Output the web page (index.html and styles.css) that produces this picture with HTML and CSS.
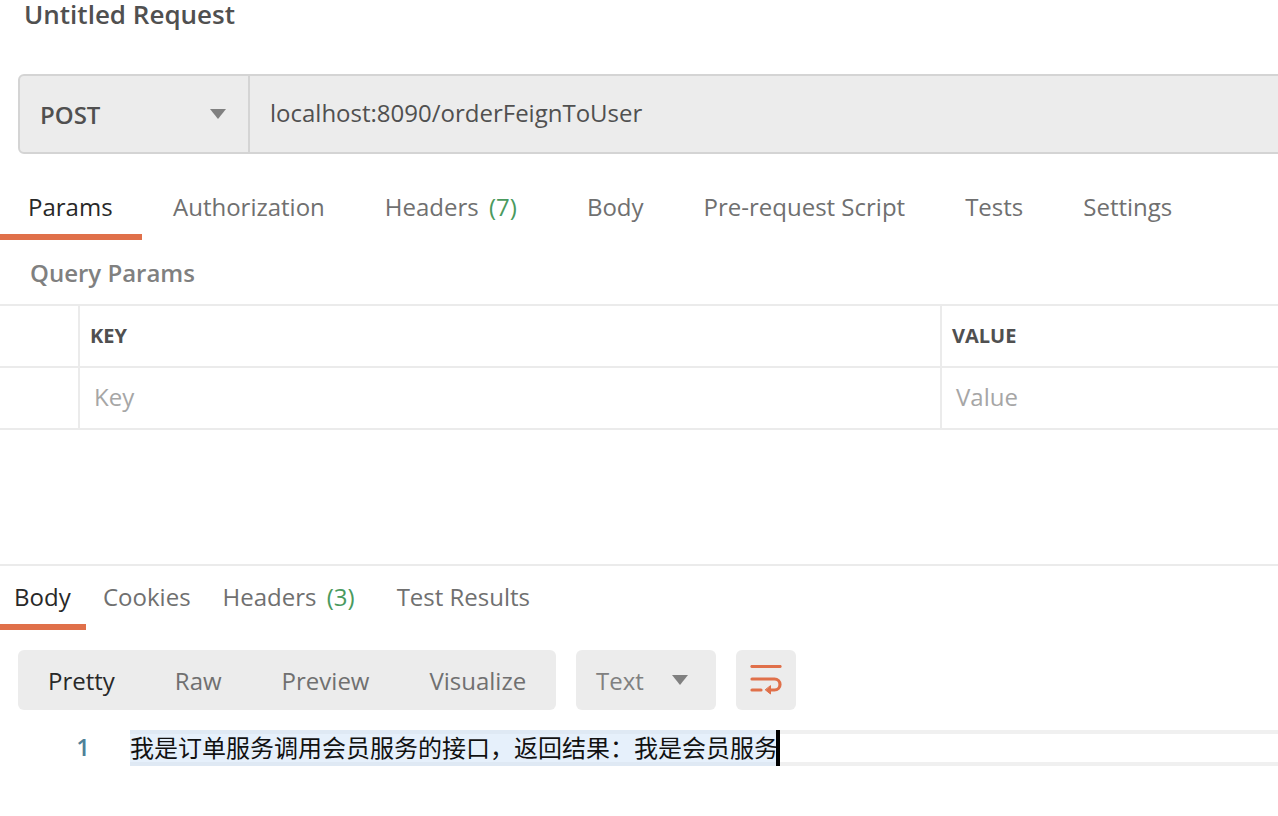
FILE: index.html
```html
<!DOCTYPE html>
<html lang="zh">
<head>
<meta charset="utf-8">
<title>Untitled Request</title>
<link rel="stylesheet" href="styles.css">
</head>
<body>
<h1 class="title">Untitled Request</h1>
<div class="urlbar">
  <div class="method"><span>POST</span><i class="caret"></i></div>
  <div class="url">localhost:8090/orderFeignToUser</div>
</div>
<nav class="tabs req-tabs">
  <span class="tab active">Params</span>
  <span class="tab">Authorization</span>
  <span class="tab">Headers <em>(7)</em></span>
  <span class="tab">Body</span>
  <span class="tab">Pre-request Script</span>
  <span class="tab">Tests</span>
  <span class="tab">Settings</span>
</nav>
<div class="query">Query Params</div>
<div class="table">
  <div class="row">
    <div class="c0"></div>
    <div class="c1 head">KEY</div>
    <div class="c2 head">VALUE</div>
  </div>
  <div class="row">
    <div class="c0"></div>
    <div class="c1 ph">Key</div>
    <div class="c2 ph">Value</div>
  </div>
</div>
<section class="response">
  <nav class="tabs res-tabs">
    <span class="tab active">Body</span>
    <span class="tab">Cookies</span>
    <span class="tab">Headers <em>(3)</em></span>
    <span class="tab">Test Results</span>
  </nav>
  <div class="toolbar">
    <div class="modes">
      <span class="mode active">Pretty</span>
      <span class="mode">Raw</span>
      <span class="mode">Preview</span>
      <span class="mode">Visualize</span>
    </div>
    <div class="format"><span>Text</span><i class="caret"></i></div>
    <div class="wrap">
      <svg width="32" height="30" viewBox="0 0 32 30" fill="none" stroke="#e0704a" stroke-width="3.2" stroke-linecap="round" stroke-linejoin="round">
        <path d="M2 1.500H30"/>
        <path d="M2 14H24.500a5.500 5.500 0 0 1 0 11H19"/>
        <path d="M2 25H11"/>
        <path d="M20.500 21V29L15.500 25Z" fill="#e0704a" stroke-width="1"/>
      </svg>
    </div>
  </div>
  <div class="code">
    <span class="num">1</span>
    <div class="line"><span class="sel">我是订单服务调用会员服务的接口，返回结果：我是会员服务</span><i class="cursor"></i></div>
  </div>
</section>
</body>
</html>
```
FILE: styles.css
```css
* { box-sizing: border-box; }
html, body { margin: 0; padding: 0; height: 100%; overflow: hidden; }
body {
  background: #fff;
  font-family: "Open Sans", "Noto Sans", sans-serif;
  font-size: 24px;
  color: #505050;
  width: 1278px;
  height: 816px;
}
.title {
  margin: 0;
  padding: 0 0 0 24px;
  height: 74px;
  font-size: 26px;
  font-weight: 600;
  line-height: 28px;
  color: #505050;
}
.urlbar {
  display: flex;
  margin-left: 18px;
  width: 1300px;
  height: 80px;
  background: #ececec;
  border: 2px solid #d4d4d4;
  border-radius: 6px;
}
.method {
  width: 230px;
  flex: none;
  display: flex;
  align-items: center;
  justify-content: space-between;
  padding: 0 22px 0 20px;
  border-right: 2px solid #d4d4d4;
  font-weight: 600;
  color: #505050;
}
.caret {
  width: 0;
  height: 0;
  border-left: 8px solid transparent;
  border-right: 8px solid transparent;
  border-top: 10px solid #808080;
}
.url {
  padding: 0 20px;
  line-height: 74px;
  color: #505050;
}
.tabs { display: flex; }
.tab {
  display: block;
  color: #707070;
  white-space: nowrap;
}
.tab em { font-style: normal; color: #4a9a5e; margin: 0 10px 0 4px; }
.tab.active { color: #282828; border-bottom: 6px solid #e0704a; }
.req-tabs { height: 86px; padding-top: 34px; gap: 60px; }
.req-tabs .tab { line-height: 38px; height: 52px; }
.req-tabs .tab.active { width: 142px; padding-left: 28px; margin-right: -29px; }
.query {
  height: 66px;
  padding-left: 30px;
  line-height: 66px;
  font-size: 24px;
  font-weight: 600;
  color: #808080;
}
.table { border-top: 2px solid #ebebeb; margin-top: -2px; }
.row {
  display: flex;
  height: 62px;
  border-bottom: 2px solid #ebebeb;
}
.c0 { width: 78px; flex: none; }
.c1 { width: 862px; flex: none; border-left: 2px solid #ebebeb; }
.c2 { flex: 1; border-left: 2px solid #ebebeb; }
.head {
  padding-left: 10px;
  font-size: 20px;
  font-weight: 700;
  line-height: 60px;
  color: #505050;
}
.ph {
  padding-left: 14px;
  line-height: 58px;
  color: #a6a6a6;
}
.response {
  margin-top: 134px;
  border-top: 2px solid #ebebeb;
}
.res-tabs { height: 64px; padding-top: 12px; gap: 32px; }
.res-tabs .tab { line-height: 38px; height: 52px; }
.res-tabs .tab.active { width: 86px; padding-left: 14px; margin-right: -15px; }
.toolbar {
  display: flex;
  gap: 20px;
  margin: 20px 0 0 18px;
  height: 60px;
}
.modes {
  width: 538px;
  display: flex;
  align-items: center;
  gap: 60px;
  padding-left: 30px;
  background: #ececec;
  border-radius: 6px;
  color: #707070;
}
.mode.active { color: #282828; }
.format {
  width: 140px;
  display: flex;
  align-items: center;
  justify-content: space-between;
  padding: 0 28px 0 20px;
  background: #ececec;
  border-radius: 6px;
  color: #808080;
}
.wrap {
  width: 60px;
  display: flex;
  align-items: center;
  justify-content: center;
  background: #ececec;
  border-radius: 6px;
}
.code {
  display: flex;
  margin-top: 20px;
  height: 36px;
}
.num {
  width: 130px;
  flex: none;
  padding-right: 40px;
  text-align: right;
  line-height: 34px;
  font-weight: 600;
  color: #4f8199;
}
.line {
  flex: 1;
  position: relative;
  border-top: 4px solid #f0f0f0;
  border-bottom: 4px solid #f0f0f0;
  height: 36px;
}
.sel {
  position: absolute;
  left: 0;
  top: -4px;
  height: 36px;
  background: #e6f0fb;
  box-shadow: inset 0 4px 0 #dfe9f4, inset 0 -4px 0 #dfe9f4;
  font-family: "Noto Sans CJK SC", sans-serif;
  font-size: 24px;
  line-height: 34px;
  color: #111;
  white-space: nowrap;
}
.cursor {
  position: absolute;
  left: 646px;
  top: -4px;
  width: 4px;
  height: 36px;
  background: #000;
}
```
